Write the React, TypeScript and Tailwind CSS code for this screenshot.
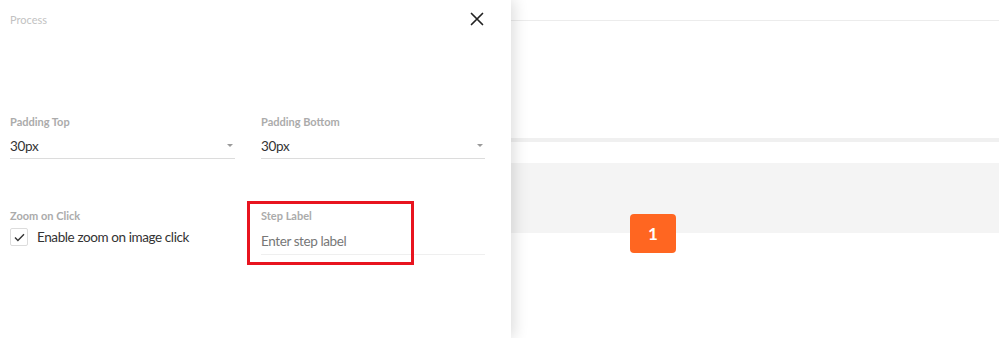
import React from 'react'

const font = { fontFamily: 'Lato, "Open Sans", sans-serif' }

function Caret() {
  return <span className="mb-[1px] h-0 w-0 border-x-[3px] border-t-[3px] border-x-transparent border-t-[#9a9a9a]" />
}

function SelectField({ label, value }: { label: string; value: string }) {
  return (
    <div className="flex flex-col">
      <div className="text-[11px] font-bold leading-[13px] text-[#ababab]">{label}</div>
      <div className="flex items-center justify-between border-b border-[#dcdcdc] pt-[9px] pb-[3px] pr-[2px]">
        <span className="text-[13.5px] leading-[18px] tracking-[-0.3px] text-[#333]">{value}</span>
        <Caret />
      </div>
    </div>
  )
}

export default function App() {
  return (
    <div className="flex h-[338px] w-[999px] overflow-hidden bg-white" style={font}>
      <aside className="relative z-10 flex w-[511px] shrink-0 flex-col bg-white pl-[10px] pr-[26px] shadow-[3px_0_14px_rgba(0,0,0,0.14)]">
        <div className="flex h-[40px] items-start justify-between pt-[13px]">
          <span className="text-[11px] leading-[13px] text-[#c2c2c2]">Process</span>
          <svg width="14" height="14" viewBox="0 0 14 14" className="mt-[-1px] mr-[1px]">
            <path d="M1.5 1.5 12.5 12.5M12.5 1.5 1.5 12.5" stroke="#222" strokeWidth="1.7" strokeLinecap="round" />
          </svg>
        </div>

        <div className="mt-[75px] grid grid-cols-[225px_224px] gap-x-[26px]">
          <SelectField label="Padding Top" value="30px" />
          <SelectField label="Padding Bottom" value="30px" />
        </div>

        <div className="mt-[50px] grid grid-cols-[225px_224px] gap-x-[26px]">
          <div className="flex flex-col">
            <div className="text-[11px] font-bold leading-[13px] text-[#ababab]">Zoom on Click</div>
            <label className="mt-[6px] flex items-center gap-[9px]">
              <span className="flex h-[18px] w-[18px] items-center justify-center rounded-[2px] border border-[#dcdcdc]">
                <svg width="11" height="9" viewBox="0 0 11 9">
                  <path d="M1 4.6 3.9 7.4 10 1.3" fill="none" stroke="#333" strokeWidth="1.4" />
                </svg>
              </span>
              <span className="text-[13.5px] leading-[18px] tracking-[-0.4px] text-[#333]">Enable zoom on image click</span>
            </label>
          </div>

          <div className="relative flex flex-col">
            <div className="text-[11px] font-bold leading-[13px] text-[#ababab]">Step Label</div>
            <div className="border-b border-[#efefef] pt-[10px] pb-[4px] text-[13.5px] leading-[18px] tracking-[-0.4px] text-[#777]">
              Enter step label
            </div>
            <div className="pointer-events-none absolute left-[-14px] top-[-8px] h-[64px] w-[167px] border-[3px] border-[#e8141f]" />
          </div>
        </div>
      </aside>

      <main className="relative flex flex-1 flex-col">
        <div className="h-[21px] border-b border-[#ececec]" />
        <div className="h-[117px]" />
        <div className="h-[4px] bg-[#f0f0f0]" />
        <div className="h-[21px]" />
        <div className="h-[70px] bg-[#f4f4f4]" />
        <div className="absolute left-[119px] top-[214px] flex h-[39px] w-[46px] items-center justify-center rounded-[4px] bg-[#ff6621] text-[17px] font-bold text-white">
          1
        </div>
      </main>
    </div>
  )
}
